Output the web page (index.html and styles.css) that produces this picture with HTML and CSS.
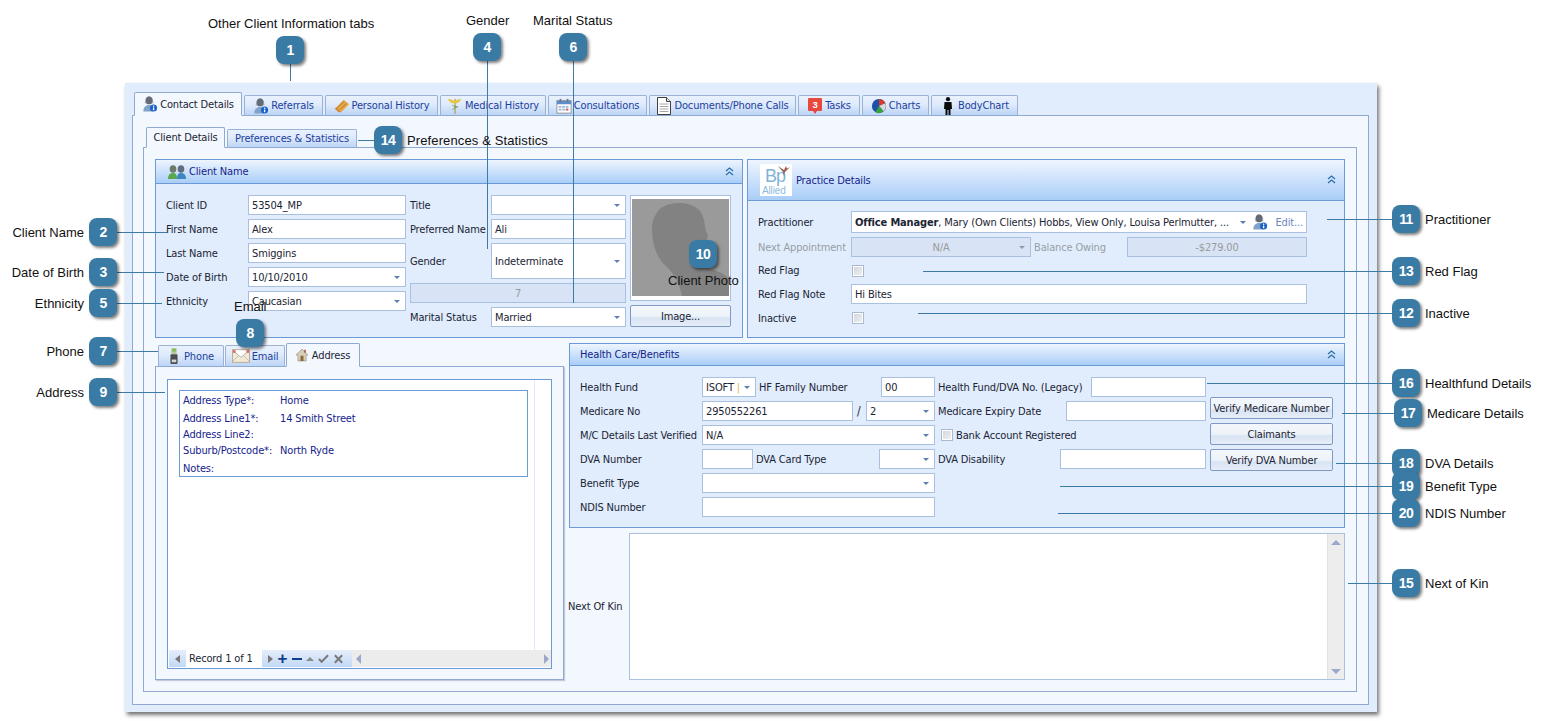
FILE: index.html
```html
<!DOCTYPE html>
<html lang="en">
<head>
<meta charset="utf-8">
<title>Client Contact Details</title>
<link rel="stylesheet" href="styles.css">
</head>
<body>
<svg class="defs" xmlns="http://www.w3.org/2000/svg">
  <symbol id="i-user" viewBox="0 0 18 18"><ellipse cx="8" cy="5" rx="3.8" ry="4.4" fill="#59626c"/><path d="M3 8c1 1 9 1 10 0l-1-5-4-3-4 3z" fill="#6d7680" opacity=".5"/><path d="M1.500 17.500c0-5 2.500-7.500 6.500-7.500 3 0 5 1 6 3l-2 4.500z" fill="#7fa3c8"/><circle cx="13" cy="13.500" r="4" fill="#1a62c8"/><rect x="12.300" y="13" width="1.500" height="3" fill="#fff"/><rect x="12.300" y="10.800" width="1.500" height="1.400" fill="#fff"/></symbol>
  <symbol id="i-ticket" viewBox="0 0 18 18"><path d="M1 12 11 2l6 5L8 16z" fill="#e5a84a"/><path d="M4 11 11 4M7 13l7-7" stroke="#b06f1e" stroke-width="1"/><path d="M1 12l4 4 3 0-5-6z" fill="#cf8a34"/></symbol>
  <symbol id="i-med" viewBox="0 0 18 18"><rect x="8.300" y="1" width="1.500" height="17" fill="#b6a45a"/><path d="M1 1c3 0 6 1 7.500 3 1.500-2 4.500-3 7.500-3-1 3-4 5-7.500 5S2 4 1 1z" fill="#e7c53c"/><path d="M6 8c2 2 4 1 6 2-2 1-4 1-6 3" stroke="#6f9a4d" fill="none"/></symbol>
  <symbol id="i-cal" viewBox="0 0 18 18"><rect x="1" y="3" width="16" height="14" fill="#fdfdfd" stroke="#8b9099"/><rect x="1" y="3" width="16" height="4" fill="#5d8fd0"/><rect x="4" y="1" width="2" height="4" fill="#777"/><rect x="12" y="1" width="2" height="4" fill="#777"/><path d="M3 9h3v2H3zm4 0h3v2H7zm4 0h3v2h-3zM3 12h3v2H3zm4 0h3v2H7z" fill="#9ab6dc"/><rect x="11" y="12" width="3" height="2" fill="#d6534a"/></symbol>
  <symbol id="i-doc" viewBox="0 0 15 18"><path d="M1 .5h9l4 4v13H1z" fill="#fff" stroke="#3f3f3f"/><path d="M10 .5v4h4" fill="#ddd" stroke="#3f3f3f"/><path d="M3 7h9M3 9.500h9M3 12h9M3 14.500h9" stroke="#a8a8a8"/></symbol>
  <symbol id="i-task" viewBox="0 0 15 18"><path d="M1.500 1h12a1 1 0 0 1 1 1v11a1 1 0 0 1-1 1H9.500l-2 3-2-3h-4a1 1 0 0 1-1-1V2a1 1 0 0 1 1-1z" fill="#e8493f"/><text x="7.500" y="11" text-anchor="middle" font-family="Liberation Sans" font-weight="700" font-size="9.500" fill="#fff">3</text></symbol>
  <symbol id="i-chart" viewBox="0 0 18 18"><circle cx="9" cy="9" r="8" fill="#1e50a8"/><path d="M9 9 9 1a8 8 0 0 1 7 5z" fill="#d8382e"/><path d="M9 9 16 6a8 8 0 0 1-2 9z" fill="#d9d9d9"/><path d="M9 9l5 6a8 8 0 0 1-9 1z" fill="#39a23c"/></symbol>
  <symbol id="i-body" viewBox="0 0 10 18"><circle cx="5" cy="2.200" r="2.100" fill="#0b0b0b"/><path d="M1.500 5h7l.5 7H7.500v6H5.500v-5h-1v5h-2v-6H1z" fill="#0b0b0b"/></symbol>
  <symbol id="i-people" viewBox="0 0 18 14"><ellipse cx="5" cy="4" rx="3.300" ry="3.800" fill="#6b7a6b"/><path d="M0 14c0-4 2-6 5-6s4 2 4 6z" fill="#58a84d"/><ellipse cx="13" cy="4" rx="3.300" ry="3.800" fill="#5e6d80"/><path d="M9 14c0-4 1-6 4-6s5 2 5 6z" fill="#3d86c2"/></symbol>
  <symbol id="i-phone" viewBox="0 0 12 18"><rect x="3" y="0" width="6" height="7" rx="1" fill="#b7c9a0"/><rect x="4" y="1" width="4" height="3" fill="#7fbf4d"/><rect x="2" y="7" width="8" height="11" rx="1" fill="#4b4f52"/><rect x="3.500" y="13" width="5" height="3" fill="#d5d5d5"/></symbol>
  <symbol id="i-mail" viewBox="0 0 20 15"><rect x=".5" y=".5" width="19" height="14" fill="#f2ead9" stroke="#b9a58c"/><path d="M.5 1 10 9l9.500-8" fill="#fff" stroke="#aaa"/><path d="M.5 14 7 7m12.500 7L13 7" stroke="#c8b8a2" fill="none"/><rect x="1" y="1" width="3" height="3" fill="#d8706a"/><rect x="16" y="1" width="3" height="3" fill="#d8706a"/></symbol>
  <symbol id="i-house" viewBox="0 0 16 16"><path d="M8 0 0 8h2.500v8h11V8H16z" fill="#d9cdb8" stroke="#7f6d58" stroke-width=".6"/><rect x="6" y="9" width="4" height="7" fill="#8a6a42"/><rect x="11" y="1" width="2" height="4" fill="#9f5240"/></symbol>
  <symbol id="i-chev" viewBox="0 0 9 9"><path d="M1 4 4.500 1 8 4M1 8l3.500-3L8 8" fill="none" stroke="#2f6eac" stroke-width="1.300"/></symbol>
  <symbol id="i-bird" viewBox="0 0 14 12"><path d="M1 1l6 4 6-3-5 5-1 4-1-4z" fill="#8a6a5a"/><path d="M7 5l2-4 1 3z" fill="#b84a40"/></symbol>
</svg>

<div class="window">
  <nav class="tabs main-tabs">
    <div class="tab active"><svg class="ic"><use href="#i-user"/></svg>Contact Details</div>
    <div class="tab"><svg class="ic"><use href="#i-user"/></svg>Referrals</div>
    <div class="tab"><svg class="ic"><use href="#i-ticket"/></svg>Personal History</div>
    <div class="tab"><svg class="ic"><use href="#i-med"/></svg>Medical History</div>
    <div class="tab"><svg class="ic"><use href="#i-cal"/></svg>Consultations</div>
    <div class="tab"><svg class="ic"><use href="#i-doc"/></svg>Documents/Phone Calls</div>
    <div class="tab"><svg class="ic"><use href="#i-task"/></svg>Tasks</div>
    <div class="tab"><svg class="ic"><use href="#i-chart"/></svg>Charts</div>
    <div class="tab"><svg class="ic"><use href="#i-body"/></svg>BodyChart</div>
  </nav>
  <div class="page outer-page">
    <nav class="tabs sub-tabs">
      <div class="tab active">Client Details</div>
      <div class="tab">Preferences &amp; Statistics</div>
    </nav>
    <div class="page inner-page">
      <div class="top-row">
        <section class="group client">
          <header class="group-head"><svg class="ic-people"><use href="#i-people"/></svg><span>Client Name</span><svg class="chev"><use href="#i-chev"/></svg></header>
          <div class="client-body">
            <div class="form col-a">
              <label>Client ID</label><div class="field">53504_MP</div>
              <label>First Name</label><div class="field">Alex</div>
              <label>Last Name</label><div class="field">Smiggins</div>
              <label>Date of Birth</label><div class="field combo">10/10/2010</div>
              <label>Ethnicity</label><div class="field combo">Caucasian</div>
            </div>
            <div class="form col-b">
              <label>Title</label><div class="field combo"></div>
              <label>Preferred Name</label><div class="field">Ali</div>
              <label>Gender</label><div class="field combo">Indeterminate</div>
              <div class="field disabled center span2">7</div>
              <label>Marital Status</label><div class="field combo">Married</div>
            </div>
            <div class="col-c">
              <div class="photo">
                <svg viewBox="0 0 97 97"><rect width="97" height="97" fill="#9a9a9a"/><path d="M26 12C34 2 58 1 68 12c6 8 4 18 7 22 3 6-3 8-3 14l6 22c7 2 14 4 19 10v17H50c-2-12-8-22-15-29C25 60 20 45 20 30c0-8 2-12 6-18z" fill="#828282"/></svg>
              </div>
              <button class="btn">Image...</button>
            </div>
          </div>
        </section>
        <section class="group practice">
          <header class="group-head"><div class="logo"><svg class="bird"><use href="#i-bird"/></svg><span class="bp">Bp</span><span class="allied">Allied</span></div><span>Practice Details</span><svg class="chev"><use href="#i-chev"/></svg></header>
          <div class="practice-body">
            <label>Practitioner</label>
            <div class="field practitioner"><span class="ptext"><b>Office Manager</b>, Mary (Own Clients) Hobbs, View Only, Louisa Perlmutter, ...</span><i class="arrow"></i><svg class="ic edit-ic"><use href="#i-user"/></svg><span class="edit">Edit...</span></div>
            <label class="muted">Next Appointment</label>
            <div class="appt"><div class="field disabled center combo na">N/A</div><label class="muted">Balance Owing</label><div class="field disabled center bal">-$279.00</div></div>
            <label>Red Flag</label><div class="check-cell"><span class="check"></span></div>
            <label>Red Flag Note</label><div class="field">Hi Bites</div>
            <label>Inactive</label><div class="check-cell"><span class="check"></span></div>
          </div>
        </section>
      </div>
      <div class="bottom-row">
        <div class="address-col">
          <nav class="tabs addr-tabs">
            <div class="tab"><svg class="ic-sm"><use href="#i-phone"/></svg>Phone</div>
            <div class="tab"><svg class="ic-sm wide"><use href="#i-mail"/></svg>Email</div>
            <div class="tab active"><svg class="ic-sm"><use href="#i-house"/></svg>Address</div>
          </nav>
          <div class="page addr-page">
            <div class="grid">
              <div class="grid-body">
                <div class="card">
                  <span>Address Type*:</span><span>Home</span>
                  <span>Address Line1*:</span><span>14 Smith Street</span>
                  <span>Address Line2:</span><span></span>
                  <span>Suburb/Postcode*:</span><span>North Ryde</span>
                  <span>Notes:</span><span></span>
                </div>
              </div>
              <div class="navbar">
                <div class="nav-btns first"><i class="tri left"></i></div>
                <div class="record">Record 1 of 1</div>
                <div class="nav-btns rest"><i class="tri right"></i><b class="plus">+</b><b class="minus"></b><i class="tri up"></i><svg class="tick" viewBox="0 0 12 10"><path d="M1 5l3 3 7-7" fill="none" stroke="#7a7a7a" stroke-width="2.200"/></svg><svg class="tick" viewBox="0 0 12 10"><path d="M2 1l8 8M10 1 2 9" fill="none" stroke="#7a7a7a" stroke-width="2.200"/></svg></div>
                <div class="hscroll"><i class="tri left sb"></i><i class="tri right sb"></i></div>
              </div>
            </div>
          </div>
        </div>
        <div class="right-col">
          <section class="group health">
            <header class="group-head"><span>Health Care/Benefits</span><svg class="chev"><use href="#i-chev"/></svg></header>
            <div class="health-body">
              <div class="health-form">
                <div class="hrow r1"><label>Health Fund</label><div class="field combo">ISOFT <em class="caret">|</em></div><label class="pl">HF Family Number</label><div class="field">00</div><label class="pl">Health Fund/DVA No. (Legacy)</label><div class="field"></div></div>
                <div class="hrow r2"><label>Medicare No</label><div class="field">2950552261</div><span class="slash">/</span><div class="field combo">2</div><label class="pl">Medicare Expiry Date</label><div class="field"></div></div>
                <div class="hrow r3"><label>M/C Details Last Verified</label><div class="field combo">N/A</div><div class="bank"><span class="check"></span>Bank Account Registered</div></div>
                <div class="hrow r4"><label>DVA Number</label><div class="field"></div><label class="pl">DVA Card Type</label><div class="field combo"></div><label class="pl">DVA Disability</label><div class="field"></div></div>
                <div class="hrow r5"><label>Benefit Type</label><div class="field combo"></div></div>
                <div class="hrow r5"><label>NDIS Number</label><div class="field"></div></div>
              </div>
              <div class="health-btns">
                <button class="btn">Verify Medicare Number</button>
                <button class="btn">Claimants</button>
                <button class="btn">Verify DVA Number</button>
              </div>
            </div>
          </section>
          <div class="kin">
            <label>Next Of Kin</label>
            <div class="kin-box"><div class="vscroll"><i class="tri up sb"></i><i class="tri down sb"></i></div></div>
          </div>
        </div>
      </div>
    </div>
  </div>
</div>

<div class="callouts">
  <i class="line v l1"></i><i class="line v l4"></i><i class="line v l6"></i>
  <i class="line h l14"></i><i class="line h l2"></i><i class="line h l3"></i><i class="line h l5"></i><i class="line h l7"></i><i class="line h l9"></i>
  <i class="line h l11"></i><i class="line h l13"></i><i class="line h l12"></i><i class="line h l16"></i><i class="line h l17"></i><i class="line h l18"></i><i class="line h l19"></i><i class="line h l20"></i><i class="line h l15"></i>

  <div class="badge b1">1</div><div class="badge b2">2</div><div class="badge b3">3</div><div class="badge b4">4</div><div class="badge b5">5</div>
  <div class="badge b6">6</div><div class="badge b7">7</div><div class="badge b8">8</div><div class="badge b9">9</div><div class="badge b10">10</div>
  <div class="badge b11">11</div><div class="badge b12">12</div><div class="badge b13">13</div><div class="badge b14">14</div><div class="badge b15">15</div>
  <div class="badge b16">16</div><div class="badge b17">17</div><div class="badge b18">18</div><div class="badge b19">19</div><div class="badge b20">20</div>

  <div class="note t1">Other Client Information tabs</div>
  <div class="note t4">Gender</div>
  <div class="note t6">Marital Status</div>
  <div class="note t14">Preferences &amp; Statistics</div>
  <div class="note end t2">Client Name</div>
  <div class="note end t3">Date of Birth</div>
  <div class="note end t5">Ethnicity</div>
  <div class="note end t7">Phone</div>
  <div class="note end t9">Address</div>
  <div class="note t8">Email</div>
  <div class="note t10">Client Photo</div>
  <div class="note t11">Practitioner</div>
  <div class="note t13">Red Flag</div>
  <div class="note t12">Inactive</div>
  <div class="note t16">Healthfund Details</div>
  <div class="note t17">Medicare Details</div>
  <div class="note t18">DVA Details</div>
  <div class="note t19">Benefit Type</div>
  <div class="note t20">NDIS Number</div>
  <div class="note t15">Next of Kin</div>
</div>
</body>
</html>
```
FILE: styles.css
```css
* { box-sizing: border-box; }
html, body { margin: 0; padding: 0; }
body {
  position: relative;
  width: 1546px;
  height: 721px;
  overflow: hidden;
  background: #fff;
  font-family: "DejaVu Sans Condensed", "DejaVu Sans", sans-serif;
  font-stretch: condensed;
  font-size: 11px;
  letter-spacing: -.15px;
  color: #1b2433;
}
.defs { display: none; }
i, em { font-style: normal; }

/* window */
.window {
  display: flex;
  flex-direction: column;
  width: 1252px;
  height: 629px;
  margin: 83px 0 0 125px;
  padding: 9px 8px 7px 7px;
  background: #e1ecfd;
  box-shadow: 2px 3px 4px rgba(0,0,0,.55);
}
.page {
  background: #f3f7fe;
  border: 1px solid #8fa9d0;
}

/* tabs */
.tabs { display: grid; align-items: end; }
.main-tabs {
  grid-template-columns: 108px 79px 113px 106px 99px 147px 62px 67px 87px;
  column-gap: 2px;
  height: 24px;
  margin-bottom: -1px;
  padding-left: 2px;
  position: relative;
}
.tab {
  display: flex;
  align-items: center;
  justify-content: center;
  height: 21px;
  border: 1px solid #9ab2d6;
  border-bottom-color: #8fa9d0;
  border-radius: 2px 2px 0 0;
  background: linear-gradient(#e9f1fd, #dfeafb 45%, #bcd5f7);
  color: #1c3fa0;
  white-space: nowrap;
}
.tab.active {
  height: 24px;
  background: #f3f7fe;
  border-color: #8fa9d0;
  border-bottom-color: #f3f7fe;
  color: #1b2433;
}
.ic { width: 16px; height: 18px; margin-right: 2px; flex: none; }
.outer-page {
  flex: 1;
  display: flex;
  flex-direction: column;
  padding: 11px 11px 12px 10px;
}
.sub-tabs {
  grid-template-columns: 79px 130px;
  column-gap: 2px;
  height: 21px;
  margin-bottom: -1px;
  padding-left: 3px;
  position: relative;
}
.sub-tabs .tab { height: 19px; }
.sub-tabs .tab.active { height: 21px; }
.inner-page {
  flex: 1;
  display: flex;
  flex-direction: column;
  gap: 5px;
  padding: 11px 11px 11px 11px;
}
.top-row { display: flex; gap: 4px; height: 179px; }
.bottom-row { display: flex; gap: 5px; height: 337px; }

/* group boxes */
.group {
  border: 1px solid #6c9ad6;
  background: #e1edfd;
}
.client { width: 588px; }
.practice { width: 598px; }
.group-head {
  position: relative;
  display: flex;
  align-items: center;
  height: 24px;
  padding-left: 12px;
  border-bottom: 1px solid #6c9ad6;
  background: linear-gradient(#eef5fe, #aaceF8);
  color: #16238c;
}
.chev {
  position: absolute;
  right: 8px;
  top: 50%;
  width: 9px;
  height: 9px;
  margin-top: -5px;
}
.ic-people { width: 18px; height: 14px; margin-right: 3px; }

/* fields */
label { display: flex; align-items: center; white-space: nowrap; }
.field {
  position: relative;
  display: flex;
  align-items: center;
  height: 20px;
  padding-left: 3px;
  border: 1px solid #a9c0e1;
  background: #fff;
  white-space: nowrap;
  overflow: hidden;
}
.combo::after, .arrow {
  content: "";
  position: absolute;
  right: 5px;
  top: 50%;
  margin-top: -1px;
  border: 3px solid transparent;
  border-top: 3px solid #5b80ae;
  border-bottom: 0;
}
.disabled { background: #d8e4f5; color: #9a9a9a; }
.disabled.combo::after { border-top-color: #8f9aaa; }
.center { justify-content: center; padding-left: 0; }
.muted { color: #989da5; }
.check {
  display: inline-block;
  width: 12px;
  height: 12px;
  border: 1px solid #a9b9cf;
  outline: 1px solid #fff;
  outline-offset: -2px;
  background: linear-gradient(135deg, #cfd3d8, #f2f3f5);
}
.check-cell { display: flex; align-items: center; padding-left: 1px; }
.btn {
  height: 22px;
  padding: 0;
  border: 1px solid #7f9ac2;
  border-radius: 2px;
  background: linear-gradient(#f3f7fc, #eef3fa 50%, #d8e4f3 60%, #e6edf7);
  font: inherit;
  font-stretch: inherit;
  letter-spacing: inherit;
  color: #1b2433;
}

/* client name */
.client-body { display: flex; gap: 4px; padding: 11px 0 0 10px; }
.form { display: grid; row-gap: 4px; }
.col-a { width: 240px; grid-template-columns: 82px 158px; grid-auto-rows: 20px; }
.col-b { width: 216px; grid-template-columns: 81px 135px; grid-template-rows: 20px 20px 36px 20px 20px; }
.col-b .field { height: auto; }
.span2 { grid-column: 1 / 3; }
.col-c { display: flex; flex-direction: column; gap: 4px; width: 101px; }
.photo {
  height: 106px;
  padding: 3px 1px;
  border: 1px solid #a9c0e1;
  background: #fff;
}
.photo svg { display: block; width: 97px; height: 97px; }

/* practice */
.practice .group-head { height: 41px; padding-left: 12px; gap: 4px; }
.logo {
  position: relative;
  display: flex;
  flex-direction: column;
  width: 32px;
  height: 32px;
  padding-left: 5px;
  background: #fff;
  color: #7fb2dc;
}
.bp { font: 18px/19px "Liberation Sans", sans-serif; letter-spacing: -1px; margin-top: 3px; }
.allied { font: 10px/9px "Liberation Sans", sans-serif; margin-left: -3px; color: #8dbbe0; }
.bird { position: absolute; right: 1px; top: 1px; width: 14px; height: 12px; }
.practice-body {
  display: grid;
  grid-template-columns: 93px 456px;
  grid-template-rows: 22px 20px 19px 20px 20px;
  row-gap: 4px;
  padding: 10px 0 0 10px;
}
.practitioner { height: 22px; padding-left: 3px; color: #1b2433; }
.ptext { flex: none; width: 389px; overflow: hidden; }
.ptext b { font-weight: 700; }
.arrow { right: 60px; }
.edit-ic { position: absolute; right: 36px; top: 1px; }
.edit { position: absolute; right: 3px; color: #6e88bd; }
.appt { display: flex; align-items: center; }
.na { width: 180px; }
.appt label { width: 96px; padding-left: 3px; }
.bal { width: 180px; }

/* address */
.address-col { display: flex; flex-direction: column; width: 409px; }
.addr-tabs {
  grid-template-columns: 66px 60px 74px;
  column-gap: 1px;
  height: 24px;
  margin-bottom: -1px;
  padding-left: 3px;
  position: relative;
}
.addr-tabs .tab { height: 22px; }
.addr-tabs .tab.active { height: 24px; }
.ic-sm { width: 12px; height: 16px; margin-right: 4px; }
.ic-sm.wide { width: 18px; height: 14px; margin-right: 2px; }
.addr-page { flex: 1; display: flex; padding: 12px 11px 10px 11px; box-shadow: 1px 1px 1px rgba(120,140,170,.4); }
.grid {
  flex: 1;
  display: flex;
  flex-direction: column;
  border: 1px solid #6c9ad6;
  background: #fff;
}
.grid-body {
  flex: 1;
  padding: 10px 0 0 11px;
  background: linear-gradient(90deg, #fff 366px, #dfeafb 366px, #dfeafb 367px, #fff 367px);
}
.card {
  display: grid;
  grid-template-columns: 97px 1fr;
  grid-template-rows: 18px 18px 14px 19px 16px;
  align-items: center;
  width: 349px;
  height: 87px;
  padding-left: 3px;
  border: 1px solid #6c9ad6;
  color: #16238c;
  white-space: nowrap;
}
.navbar { display: flex; height: 17px; margin-bottom: 1px; }
.nav-btns {
  display: flex;
  align-items: center;
  background: linear-gradient(#e6eefb, #c2d8f6);
}
.first { width: 17px; margin-left: 1px; justify-content: center; }
.record { width: 76px; padding-left: 3px; line-height: 17px; color: #1b2433; background: #fff; }
.rest { width: 90px; gap: 4px; padding-left: 6px; }
.plus {
  width: 11px;
  font: 700 17px/14px "Liberation Sans", sans-serif;
  color: #123f8a;
  text-align: center;
}
.minus { width: 10px; height: 2px; background: #123f8a; }
.tick { width: 11px; height: 10px; }
.hscroll {
  flex: 1;
  display: flex;
  align-items: center;
  justify-content: space-between;
  padding: 0 2px 0 4px;
  background: #ececec;
}
.tri { display: block; width: 0; height: 0; border: 4px solid transparent; }
.tri.left { border-right: 5px solid #777; border-left: 0; }
.tri.right { border-left: 5px solid #777; border-right: 0; }
.tri.up { border-bottom: 4px solid #8a8a8a; border-top: 0; }
.tri.down { border-top: 4px solid #9aa5c4; border-bottom: 0; }
.tri.sb { border-left-color: transparent; border-right-color: transparent; }
.tri.left.sb { border-right-color: #9aa8cc; border-width: 5px 5px 5px 0; }
.tri.right.sb { border-left-color: #9aa8cc; border-width: 5px 0 5px 5px; }
.tri.up.sb { border-bottom-color: #9aa8cc; border-width: 0 5px 5px 5px; }
.tri.down.sb { border-top-color: #9aa8cc; border-width: 5px 5px 0 5px; }

/* health */
.right-col { display: flex; flex-direction: column; gap: 5px; width: 776px; }
.health { height: 185px; }
.health .group-head { height: 22px; padding-left: 10px; }
.health-body { display: flex; gap: 4px; padding: 11px 0 0 10px; }
.health-form { display: flex; flex-direction: column; gap: 4px; width: 626px; }
.hrow { display: grid; height: 20px; }
.r1 { grid-template-columns: 122px 54px 125px 54px 156px 115px; }
.r2 { grid-template-columns: 122px 151px 13px 69px 131px 140px; }
.r3 { grid-template-columns: 122px 233px 271px; }
.r4 { grid-template-columns: 122px 51px 126px 56px 125px 146px; }
.r5 { grid-template-columns: 122px 233px; }
.pl { padding-left: 3px; }
.caret { color: #f0b24a; margin-left: 3px; }
.slash { display: flex; align-items: center; padding-left: 4px; font-size: 12px; }
.bank { display: flex; align-items: center; gap: 3px; padding-left: 6px; }
.health-btns { display: flex; flex-direction: column; gap: 4px; width: 123px; margin-top: 20px; }

/* next of kin */
.kin { flex: 1; display: flex; }
.kin label { width: 60px; margin-left: -1px; margin-right: 1px; }
.kin-box {
  flex: 1;
  display: flex;
  justify-content: flex-end;
  border: 1px solid #a9c0e1;
  background: #fff;
}
.vscroll {
  display: flex;
  flex-direction: column;
  align-items: center;
  justify-content: space-between;
  width: 17px;
  padding: 6px 0 5px;
  background: #ededed;
  border-left: 1px solid #e2e2e2;
}

/* callout layer: pins placed on top of the screenshot */
.callouts { position: absolute; inset: 0; pointer-events: none; letter-spacing: 0; }
.line { position: absolute; background: #3b7ba6; }
.line.v { width: 1px; }
.line.h { height: 1px; }
.badge {
  position: absolute;
  width: 28px;
  height: 28px;
  border-radius: 8px;
  background: #3a7ba6;
  box-shadow: 2px 2px 3px rgba(0,0,0,.5);
  color: #fff;
  font: 700 14px/28px "Liberation Sans", sans-serif;
  letter-spacing: -.6px;
  text-align: center;
}
.note {
  position: absolute;
  margin-top: 1px;
  font: 13px/16px "Liberation Sans", sans-serif;
  color: #111;
  white-space: nowrap;
}
.note.end { right: 1462px; }

.l1 { left: 290px; top: 64px; height: 17px; }
.l4 { left: 487px; top: 61px; height: 188px; }
.l6 { left: 573px; top: 61px; height: 242px; }
.l14 { left: 358px; top: 140px; width: 16px; }
.l2 { left: 117px; top: 232px; width: 50px; }
.l3 { left: 117px; top: 272px; width: 47px; }
.l5 { left: 117px; top: 303px; width: 45px; }
.l7 { left: 117px; top: 351px; width: 41px; }
.l9 { left: 117px; top: 392px; width: 48px; }
.l11 { left: 1327px; top: 219px; width: 65px; }
.l13 { left: 923px; top: 271px; width: 469px; }
.l12 { left: 918px; top: 313px; width: 474px; }
.l16 { left: 1207px; top: 383px; width: 185px; }
.l17 { left: 1342px; top: 413px; width: 52px; }
.l18 { left: 1336px; top: 463px; width: 56px; }
.l19 { left: 1060px; top: 486px; width: 332px; }
.l20 { left: 1058px; top: 513px; width: 334px; }
.l15 { left: 1348px; top: 583px; width: 44px; }

.b1 { left: 276px; top: 36px; }
.b2 { left: 89px; top: 218px; }
.b3 { left: 89px; top: 258px; }
.b4 { left: 473px; top: 33px; }
.b5 { left: 89px; top: 289px; }
.b6 { left: 559px; top: 33px; }
.b7 { left: 89px; top: 337px; }
.b8 { left: 236px; top: 319px; }
.b9 { left: 89px; top: 378px; }
.b10 { left: 689px; top: 240px; }
.b11 { left: 1392px; top: 205px; }
.b12 { left: 1392px; top: 299px; }
.b13 { left: 1392px; top: 257px; }
.b14 { left: 374px; top: 126px; }
.b15 { left: 1392px; top: 569px; }
.b16 { left: 1392px; top: 369px; }
.b17 { left: 1394px; top: 399px; }
.b18 { left: 1392px; top: 449px; }
.b19 { left: 1392px; top: 472px; }
.b20 { left: 1392px; top: 499px; }

.t1 { left: 208px; top: 15px; }
.t4 { left: 466px; top: 12px; }
.t6 { left: 533px; top: 12px; }
.t14 { left: 407px; top: 132px; letter-spacing: .12px; }
.t2 { top: 224px; }
.t3 { top: 264px; }
.t5 { top: 295px; }
.t7 { top: 343px; }
.t9 { top: 384px; }
.t8 { left: 234px; top: 298px; }
.t10 { left: 668px; top: 272px; }
.t11 { left: 1425px; top: 211px; }
.t13 { left: 1425px; top: 263px; }
.t12 { left: 1425px; top: 305px; }
.t16 { left: 1425px; top: 375px; }
.t17 { left: 1427px; top: 405px; }
.t18 { left: 1425px; top: 455px; }
.t19 { left: 1425px; top: 478px; }
.t20 { left: 1425px; top: 505px; }
.t15 { left: 1425px; top: 575px; }
```
